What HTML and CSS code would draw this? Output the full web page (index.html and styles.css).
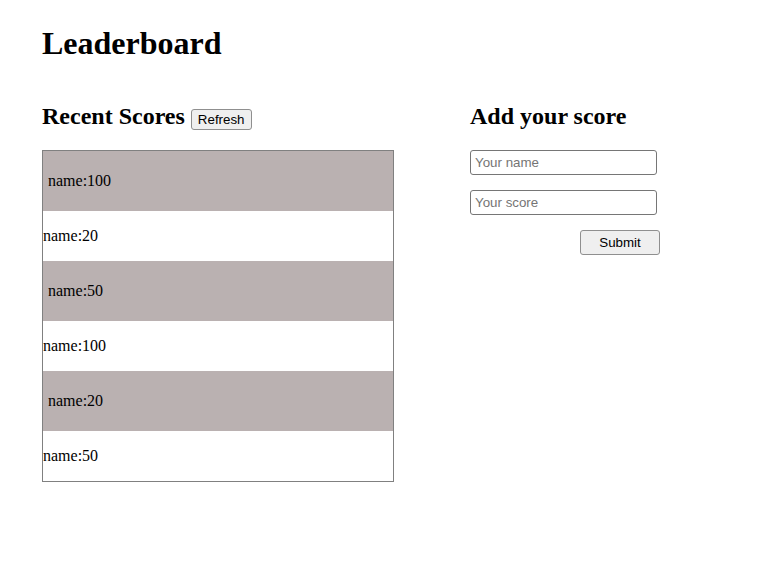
FILE: index.html
```html
<!DOCTYPE html>
<html>
<head>
<meta charset="utf-8">
<title>Leaderboard</title>
<link rel="stylesheet" href="styles.css">
</head>
<body>
<div class="page">
  <h1 class="title">Leaderboard</h1>
  <div class="columns">
    <section class="recent">
      <div class="section-head">
        <h2 class="subtitle">Recent Scores</h2>
        <button class="btn btn-refresh" type="button">Refresh</button>
      </div>
      <ul class="scores">
        <li class="score score-odd">name:100</li>
        <li class="score score-even">name:20</li>
        <li class="score score-odd">name:50</li>
        <li class="score score-even">name:100</li>
        <li class="score score-odd">name:20</li>
        <li class="score score-even">name:50</li>
      </ul>
    </section>
    <section class="add">
      <h2 class="subtitle">Add your score</h2>
      <form class="score-form">
        <input class="field" type="text" placeholder="Your name">
        <input class="field" type="text" placeholder="Your score">
        <div class="actions">
          <button class="btn btn-submit" type="button">Submit</button>
        </div>
      </form>
    </section>
  </div>
</div>
</body>
</html>
```
FILE: styles.css
```css
html, body {
  margin: 0;
  padding: 0;
  background: #ffffff;
}
body {
  font-family: "Liberation Serif", "Times New Roman", serif;
  font-size: 16px;
  color: #000000;
}
.page {
  padding: 25px 0 0 42px;
}
.title {
  margin: 0;
  font-size: 32px;
  line-height: 37px;
  font-weight: bold;
}
.columns {
  display: flex;
  gap: 76px;
  margin-top: 40px;
  align-items: flex-start;
}
.recent {
  width: 352px;
}
.section-head {
  display: flex;
  align-items: baseline;
  gap: 6px;
  height: 28px;
}
.subtitle {
  margin: 0;
  font-size: 24px;
  line-height: 28px;
  font-weight: bold;
}
.btn {
  font-family: "Liberation Sans", Arial, sans-serif;
  font-size: 13.333px;
  color: #000;
  background: #efefef;
  border: 1px solid #8f8f8f;
  border-radius: 3px;
  box-sizing: border-box;
  padding: 0 6px;
  line-height: 15px;
}
.btn-refresh {
  height: 21px;
}
.scores {
  list-style: none;
  margin: 20px 0 0 0;
  padding: 0;
  border: 1px solid #808080;
}
.score {
  display: flex;
  align-items: center;
  line-height: 18px;
}
.score-odd {
  height: 60px;
  padding-left: 5px;
  background: #bab1b1;
}
.score-even {
  height: 50px;
  background: #ffffff;
}
.add {
  display: flex;
  flex-direction: column;
}
.score-form {
  display: flex;
  flex-direction: column;
  gap: 15px;
  margin-top: 20px;
  width: 190px;
}
.field {
  width: 187px;
  height: 25px;
  box-sizing: border-box;
  border: 1px solid #767676;
  border-radius: 3px;
  padding: 1px 4px;
  font-family: "Liberation Sans", Arial, sans-serif;
  font-size: 13.333px;
  margin: 0;
}
.field::placeholder {
  color: #757575;
}
.actions {
  display: flex;
  justify-content: flex-end;
}
.btn-submit {
  width: 80px;
  height: 25px;
}
```
